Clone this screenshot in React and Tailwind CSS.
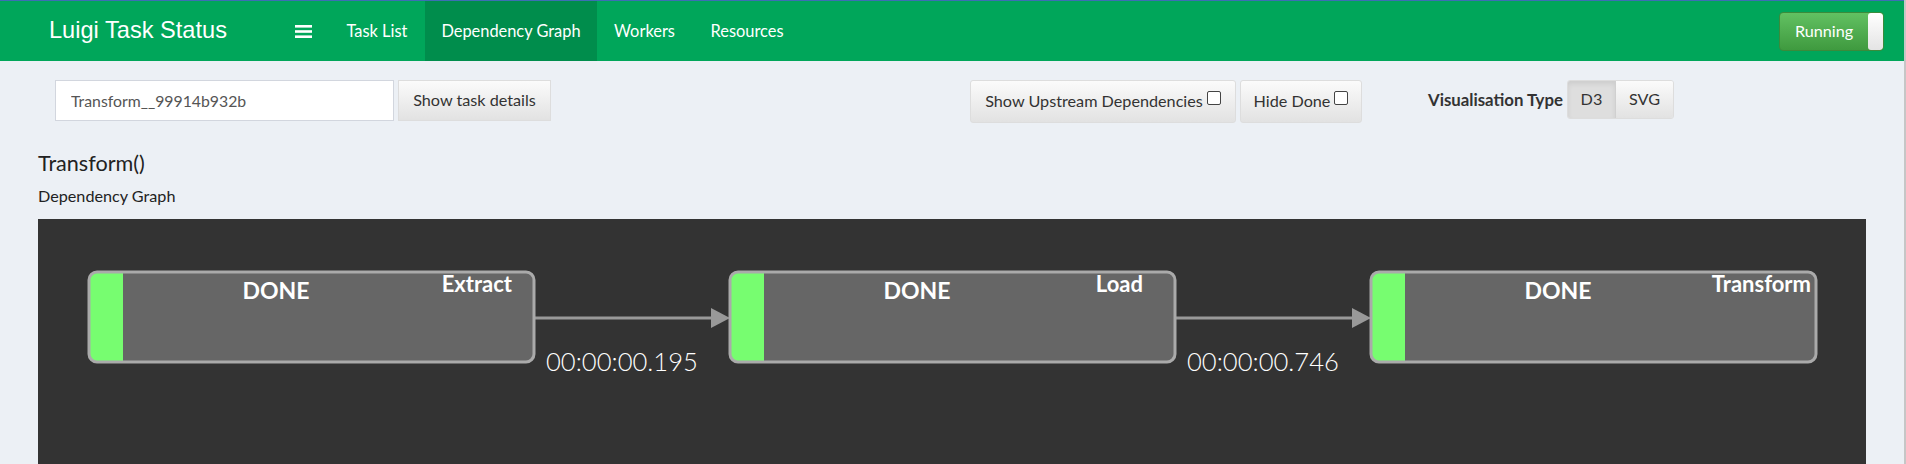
import React from 'react';

const nodes = [
  { x: 51, label: 'Extract', labelEnd: 474, duration: '00:00:00.195' },
  { x: 692, label: 'Load', labelEnd: 1105, duration: '00:00:00.746' },
  { x: 1333, label: 'Transform', labelEnd: 1773 },
];

const NODE_W = 445;
const NODE_H = 90;
const NODE_Y = 53;
const R = 8;

function Checkbox() {
  return <span className="inline-block w-[14px] h-[14px] border border-[#444] rounded-[2px] bg-white ml-[4px] -translate-y-[4px]" />;
}

function Graph() {
  return (
    <svg width="1828" height="260" className="block" style={{ fontFamily: 'Lato, sans-serif' }}>
      {nodes.map((n, i) => {
        const next = nodes[i + 1];
        const y = NODE_Y;
        const bar = `M ${n.x + R} ${y} H ${n.x + 34} V ${y + NODE_H} H ${n.x + R} A ${R} ${R} 0 0 1 ${n.x} ${y + NODE_H - R} V ${y + R} A ${R} ${R} 0 0 1 ${n.x + R} ${y} Z`;
        return (
          <g key={n.label}>
            {next && (
              <g>
                <line x1={n.x + NODE_W} y1={99} x2={next.x - 18} y2={99} stroke="#999" strokeWidth="3" />
                <polygon points={`${next.x - 19},89 ${next.x},99 ${next.x - 19},109`} fill="#999" />
                <text x={n.x + NODE_W + 12} y={152} fill="#fff" fontSize="25.6" fontWeight="300">
                  {n.duration}
                </text>
              </g>
            )}
            <rect x={n.x} y={y} width={NODE_W} height={NODE_H} rx={R} fill="#666" />
            <path d={bar} fill="#77fd70" />
            <rect x={n.x} y={y} width={NODE_W} height={NODE_H} rx={R} fill="none" stroke="#aaa" strokeWidth="3" />
            <text x={n.x + 187} y={80} fill="#fff" fontSize="23" fontWeight="700" textAnchor="middle">
              DONE
            </text>
            <text x={n.labelEnd} y={73} fill="#fff" fontSize="22" fontWeight="700" textAnchor="end">
              {n.label}
            </text>
          </g>
        );
      })}
    </svg>
  );
}

export default function App() {
  return (
    <div className="h-[464px] overflow-hidden bg-[#ecf0f5] border-r-2 border-[#c6c6c6] font-[Lato,sans-serif] text-[16.2px] text-[#333]">
      {/* top navbar */}
      <header className="h-[61px] bg-[#00a65a] border-t border-[#3d6eb4] flex items-stretch text-white">
        <div className="w-[279px] pl-[49px] flex items-center font-['Liberation_Sans',sans-serif] text-[23.6px]">
          Luigi Task Status
        </div>
        <a className="w-[50px] pl-[16px] flex items-center">
          <svg width="17" height="13" viewBox="0 0 17 13">
            <rect x="0" y="0" width="17" height="2.6" fill="#fff" />
            <rect x="0" y="5.2" width="17" height="2.6" fill="#fff" />
            <rect x="0" y="10.4" width="17" height="2.6" fill="#fff" />
          </svg>
        </a>
        <nav className="flex items-stretch text-[16.4px]">
          <a className="w-[96px] flex items-center justify-center">Task List</a>
          <a className="w-[172px] flex items-center justify-center bg-[#008d4c]">Dependency Graph</a>
          <a className="w-[95px] flex items-center justify-center">Workers</a>
          <a className="w-[110px] flex items-center justify-center">Resources</a>
        </nav>
        <div className="ml-auto mr-[20px] flex items-center">
          <div className="h-[39px] w-[105px] flex rounded-[4px] border border-[#3b8b3b] bg-gradient-to-b from-[#62c162] to-[#3f9a3f] overflow-hidden">
            <span className="flex-1 flex items-center justify-center text-white">Running</span>
            <span className="w-[15px] bg-gradient-to-b from-white to-[#e4e4e4] rounded-[3px]" />
          </div>
        </div>
      </header>

      <main className="px-[38px]">
        {/* controls row */}
        <div className="flex items-start mt-[19px]">
          <input
            readOnly
            value="Transform__99914b932b"
            className="ml-[17px] w-[339px] h-[41px] border border-[#d2d6de] bg-white pl-[15px] text-[15.8px] text-[#555] outline-none"
          />
          <button className="ml-[4px] w-[153px] h-[41px] border border-[#ddd] bg-gradient-to-b from-[#fbfbfb] to-[#e2e2e2] text-[#333]">
            Show task details
          </button>
          <button className="ml-[419px] w-[266px] h-[43px] border border-[#ddd] rounded-[3px] bg-gradient-to-b from-[#fbfbfb] to-[#e2e2e2] text-[#333] flex items-center justify-center">
            Show Upstream Dependencies
            <Checkbox />
          </button>
          <button className="ml-[4px] w-[122px] h-[43px] border border-[#ddd] rounded-[3px] bg-gradient-to-b from-[#fbfbfb] to-[#e2e2e2] text-[#333] flex items-center justify-center">
            Hide Done
            <Checkbox />
          </button>
          <div className="ml-[66px] h-[39px] flex items-center">
            <span className="font-bold text-[16.8px] text-[#333]">Visualisation Type</span>
            <div className="ml-[4px] flex h-[39px] border border-[#ddd] rounded-[3px] overflow-hidden">
              <button className="w-[48px] bg-[#dedede] shadow-[inset_0_3px_5px_rgba(0,0,0,0.08)] border-r border-[#d0d0d0] text-[#333]">
                D3
              </button>
              <button className="w-[57px] bg-gradient-to-b from-[#fbfbfb] to-[#e2e2e2] text-[#333]">SVG</button>
            </div>
          </div>
        </div>

        {/* task heading */}
        <h4 className="mt-[27px] text-[21.6px] leading-[26px] text-[#222]">Transform()</h4>
        <p className="mt-[10px] leading-[20px] text-[#222]">Dependency Graph</p>

        {/* graph panel */}
        <div className="mt-[13px] h-[260px] bg-[#333]">
          <Graph />
        </div>
      </main>
    </div>
  );
}
